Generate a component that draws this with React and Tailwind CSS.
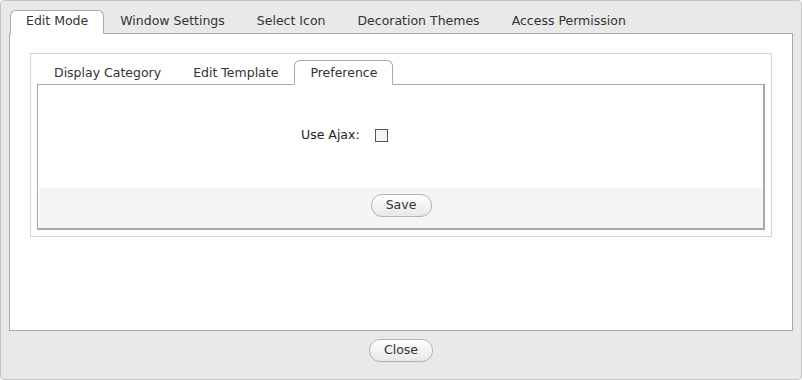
import { useState } from "react";

const font = { fontFamily: "'DejaVu Sans', Verdana, sans-serif" };

function Tab({ label, active, onClick, h = "h-[24px] pb-[1px]" }) {
    return (
        <button
            onClick={onClick}
            className={
                active
                    ? `relative z-10 ${h} px-[15px] bg-white border border-[#aaaaaa] border-b-white rounded-t-[6px] text-[12.5px] text-[#333333] leading-none`
                    : `${h} px-[15px] border border-transparent text-[12.5px] text-[#333333] leading-none`
            }
        >
            {label}
        </button>
    );
}

function Btn({ children, className }) {
    return (
        <button
            className={`h-[23px] rounded-[11px] border border-[#b4b4b4] bg-gradient-to-b from-white to-[#e8e8e8] text-[12.5px] text-[#333333] leading-none ${className}`}
        >
            {children}
        </button>
    );
}

export default function App() {
    const [outer, setOuter] = useState("Edit Mode");
    const [inner, setInner] = useState("Preference");
    const [ajax, setAjax] = useState(false);

    const outerTabs = ["Edit Mode", "Window Settings", "Select Icon", "Decoration Themes", "Access Permission"];
    const innerTabs = ["Display Category", "Edit Template", "Preference"];

    return (
        <div style={font} className="w-[802px] h-[380px] bg-[#e9e9e9] border border-[#c4c4c4] rounded-[4px] flex flex-col">
            {/* pestañas de arriba */}
            <div className="flex items-end pt-[9px] pl-[9px] -mb-px">
                {outerTabs.map((t) => (
                    <Tab key={t} label={t} active={outer === t} onClick={() => setOuter(t)} />
                ))}
            </div>

            <div className="mx-[8px] h-[298px] bg-white border border-[#aaaaaa] pt-[19px] px-[20px]">
                <div className="border border-[#d6d6d6] p-[6px]">
                    <div className="flex items-end pl-[1px] -mb-px">
                        {innerTabs.map((t) => (
                            <Tab key={t} label={t} active={inner === t} onClick={() => setInner(t)} h="h-[25px] pt-[1px]" />
                        ))}
                    </div>
                    <div className="border border-[#a8a8a8] border-r-2 border-b-2 h-[146px] flex flex-col">
                        <div className="flex-1 flex items-center pl-[263px] pb-[2px]">
                            <span className="text-[12.5px] text-[#222222]">Use Ajax:</span>
                            <span
                                onClick={() => setAjax(!ajax)}
                                className="ml-[15px] w-[13px] h-[13px] border border-[#555555] bg-[#f4f4f4] flex items-center justify-center text-[10px] leading-none"
                            >
                                {ajax ? "✓" : ""}
                            </span>
                        </div>
                        <div className="h-[40px] bg-[#f5f5f5] flex justify-center pt-[6px] ml-[1px]">
                            <Btn className="w-[61px]">Save</Btn>
                        </div>
                    </div>
                </div>
            </div>

            {/* boton cerrar */}
            <div className="flex justify-center pt-[8px]">
                <Btn className="w-[64px]">Close</Btn>
            </div>
        </div>
    );
}
